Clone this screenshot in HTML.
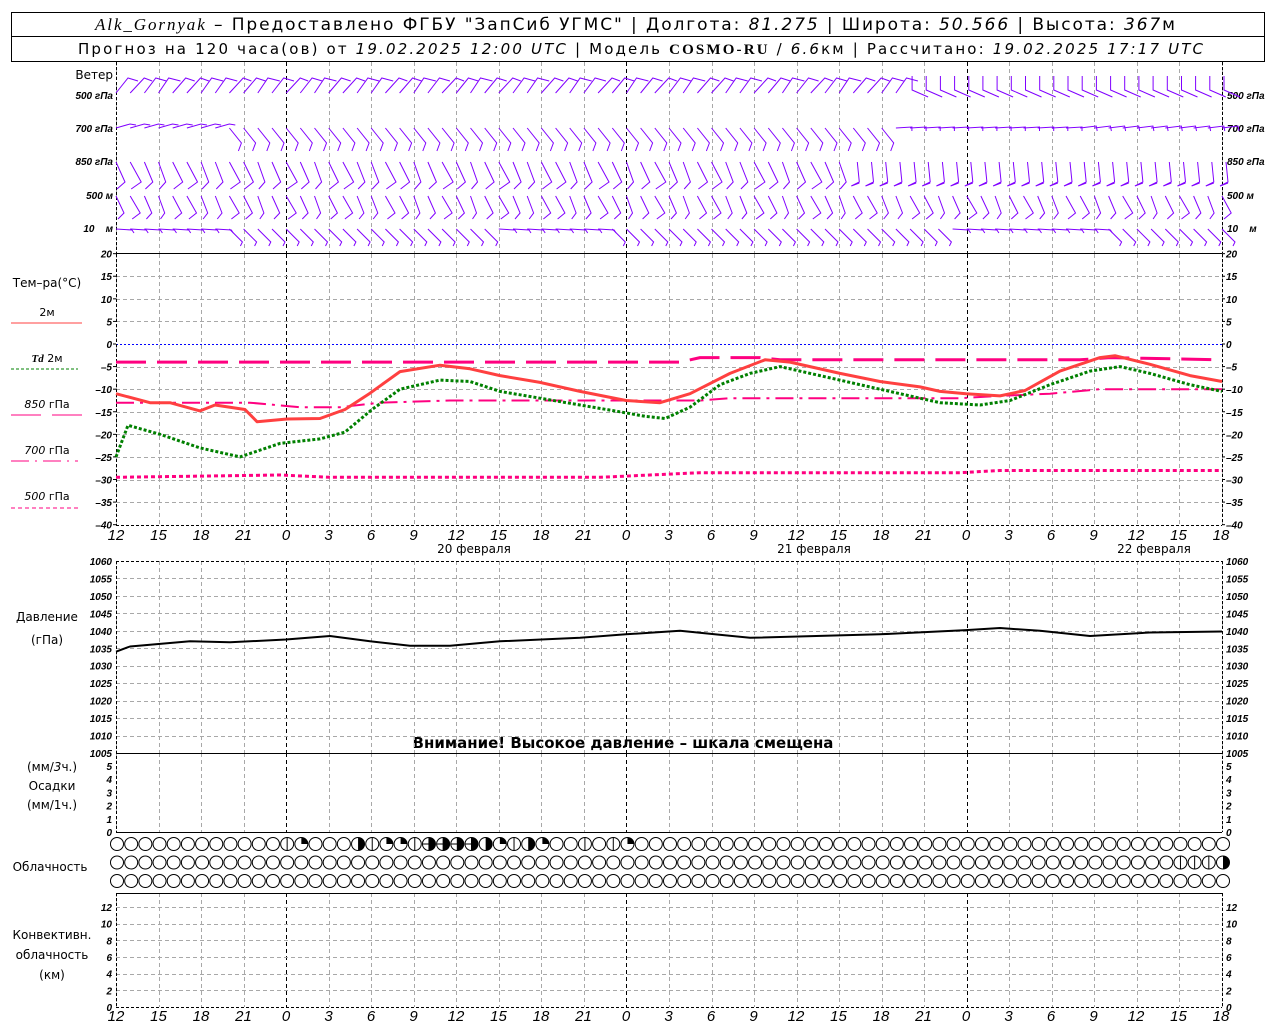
<!DOCTYPE html>
<html><head><meta charset="utf-8"><style>
html,body{margin:0;padding:0;background:#fff;width:1280px;height:1024px;overflow:hidden}
svg{display:block}
text{font-family:"Liberation Sans",sans-serif;fill:#000}
.ax{font-size:10px;font-style:italic;font-weight:bold}
.hr{font-size:15px;font-style:italic}
.lb{font-size:12px;font-family:"DejaVu Sans",sans-serif}
.hd{font-family:"DejaVu Sans",sans-serif}
</style></head><body>
<svg id="s" width="1280" height="1024" xmlns="http://www.w3.org/2000/svg">
<rect x="11.5" y="12.5" width="1253" height="49" fill="none" stroke="#000"/>
<line x1="11" y1="36.5" x2="1265" y2="36.5" stroke="#000"/>
<text x="95" y="30" class="hd" style="font-size:17px" textLength="1080" lengthAdjust="spacing"><tspan font-family="Liberation Serif" font-style="italic">Alk_Gornyak</tspan> – Предоставлено ФГБУ "ЗапСиб УГМС" | Долгота: <tspan font-style="italic">81.275</tspan> | Широта: <tspan font-style="italic">50.566</tspan> | Высота: <tspan font-style="italic">367</tspan>м</text>
<text x="78" y="54" class="hd" style="font-size:15px" textLength="1125" lengthAdjust="spacing">Прогноз на 120 часа(ов) от <tspan font-style="italic">19.02.2025 12:00 UTC</tspan>  | Модель <tspan font-family="Liberation Serif" font-weight="bold">COSMO-RU</tspan> / <tspan font-style="italic">6.6</tspan>км | Рассчитано: <tspan font-style="italic">19.02.2025 17:17 UTC</tspan></text>

<text x="113" y="79" text-anchor="end" class="lb">Ветер</text>
<text x="113" y="99" text-anchor="end" class="ax">500 гПа</text>
<text x="113" y="132" text-anchor="end" class="ax">700 гПа</text>
<text x="113" y="165" text-anchor="end" class="ax">850 гПа</text>
<text x="113" y="199" text-anchor="end" class="ax">500 м</text>
<text x="113" y="232" text-anchor="end" class="ax">10&#160;&#160;&#160; м</text>
<text x="1227" y="99" class="ax">500 гПа</text>
<text x="1227" y="132" class="ax">700 гПа</text>
<text x="1227" y="165" class="ax">850 гПа</text>
<text x="1227" y="199" class="ax">500 м</text>
<text x="1227" y="232" class="ax">10&#160;&#160;&#160; м</text>

<text x="47" y="287" text-anchor="middle" class="lb">Тем–ра(°С)</text>
<text x="47" y="316" text-anchor="middle" class="lb" style="font-size:11px">2м</text>
<line x1="11" y1="323" x2="82" y2="323" stroke="#ff4040"/>
<text x="47" y="362" text-anchor="middle" class="lb" style="font-size:11px"><tspan font-family="Liberation Serif" font-style="italic" font-weight="bold">Td</tspan>  2м</text>
<line x1="11" y1="369" x2="78" y2="369" stroke="#008000" stroke-dasharray="3,2"/>
<text x="47" y="408" text-anchor="middle" class="lb" style="font-size:11px"><tspan font-style="italic">850</tspan> гПа</text>
<line x1="11" y1="415" x2="82" y2="415" stroke="#ff0080" stroke-dasharray="30,11"/>
<text x="47" y="454" text-anchor="middle" class="lb" style="font-size:11px"><tspan font-style="italic">700</tspan> гПа</text>
<line x1="11" y1="461" x2="78" y2="461" stroke="#ff0080" stroke-dasharray="18,6,2,6"/>
<text x="47" y="500" text-anchor="middle" class="lb" style="font-size:11px"><tspan font-style="italic">500</tspan> гПа</text>
<line x1="11" y1="508" x2="78" y2="508" stroke="#ff0080" stroke-dasharray="4,3"/>

<text x="47" y="621" text-anchor="middle" class="lb">Давление</text>
<text x="47" y="644" text-anchor="middle" class="lb">(гПа)</text>
<text x="623" y="748" text-anchor="middle" class="hd" style="font-size:15px;font-weight:bold">Внимание! Высокое давление – шкала смещена</text>

<text x="52" y="771" text-anchor="middle" class="lb">(мм/<tspan font-style="italic">3</tspan>ч.)</text>
<text x="52" y="790" text-anchor="middle" class="lb">Осадки</text>
<text x="52" y="809" text-anchor="middle" class="lb">(мм/1ч.)</text>
<text x="50" y="871" text-anchor="middle" class="lb">Облачность</text>
<text x="52" y="939" text-anchor="middle" class="lb">Конвективн.</text>
<text x="52" y="959" text-anchor="middle" class="lb">облачность</text>
<text x="52" y="979" text-anchor="middle" class="lb">(км)</text>

<text x="474" y="553" text-anchor="middle" class="lb">20 февраля</text>
<text x="814" y="553" text-anchor="middle" class="lb">21 февраля</text>
<text x="1154" y="553" text-anchor="middle" class="lb">22 февраля</text>

<g class="hr">
<text x="116" y="540" text-anchor="middle">12</text><text x="158.5" y="540" text-anchor="middle">15</text><text x="201" y="540" text-anchor="middle">18</text><text x="243.5" y="540" text-anchor="middle">21</text><text x="286" y="540" text-anchor="middle">0</text><text x="328.5" y="540" text-anchor="middle">3</text><text x="371" y="540" text-anchor="middle">6</text><text x="413.5" y="540" text-anchor="middle">9</text><text x="456" y="540" text-anchor="middle">12</text><text x="498.5" y="540" text-anchor="middle">15</text><text x="541" y="540" text-anchor="middle">18</text><text x="583.5" y="540" text-anchor="middle">21</text><text x="626" y="540" text-anchor="middle">0</text><text x="668.5" y="540" text-anchor="middle">3</text><text x="711" y="540" text-anchor="middle">6</text><text x="753.5" y="540" text-anchor="middle">9</text><text x="796" y="540" text-anchor="middle">12</text><text x="838.5" y="540" text-anchor="middle">15</text><text x="881" y="540" text-anchor="middle">18</text><text x="923.5" y="540" text-anchor="middle">21</text><text x="966" y="540" text-anchor="middle">0</text><text x="1008.5" y="540" text-anchor="middle">3</text><text x="1051" y="540" text-anchor="middle">6</text><text x="1093.5" y="540" text-anchor="middle">9</text><text x="1136" y="540" text-anchor="middle">12</text><text x="1178.5" y="540" text-anchor="middle">15</text><text x="1221" y="540" text-anchor="middle">18</text>
</g>
<g class="hr">
<text x="116" y="1021" text-anchor="middle">12</text><text x="158.5" y="1021" text-anchor="middle">15</text><text x="201" y="1021" text-anchor="middle">18</text><text x="243.5" y="1021" text-anchor="middle">21</text><text x="286" y="1021" text-anchor="middle">0</text><text x="328.5" y="1021" text-anchor="middle">3</text><text x="371" y="1021" text-anchor="middle">6</text><text x="413.5" y="1021" text-anchor="middle">9</text><text x="456" y="1021" text-anchor="middle">12</text><text x="498.5" y="1021" text-anchor="middle">15</text><text x="541" y="1021" text-anchor="middle">18</text><text x="583.5" y="1021" text-anchor="middle">21</text><text x="626" y="1021" text-anchor="middle">0</text><text x="668.5" y="1021" text-anchor="middle">3</text><text x="711" y="1021" text-anchor="middle">6</text><text x="753.5" y="1021" text-anchor="middle">9</text><text x="796" y="1021" text-anchor="middle">12</text><text x="838.5" y="1021" text-anchor="middle">15</text><text x="881" y="1021" text-anchor="middle">18</text><text x="923.5" y="1021" text-anchor="middle">21</text><text x="966" y="1021" text-anchor="middle">0</text><text x="1008.5" y="1021" text-anchor="middle">3</text><text x="1051" y="1021" text-anchor="middle">6</text><text x="1093.5" y="1021" text-anchor="middle">9</text><text x="1136" y="1021" text-anchor="middle">12</text><text x="1178.5" y="1021" text-anchor="middle">15</text><text x="1221" y="1021" text-anchor="middle">18</text>
</g>
<g id="dyn"></g>
</svg>
<script>
var NS="http://www.w3.org/2000/svg",d=document.getElementById('dyn');
function el(n,a){var e=document.createElementNS(NS,n);for(var k in a)e.setAttribute(k,a[k]);d.appendChild(e);return e;}
function L(x1,y1,x2,y2,c,w,da){var a={x1:x1,y1:y1,x2:x2,y2:y2,stroke:c||'#000','stroke-width':w||1};if(da)a['stroke-dasharray']=da;return el('line',a);}
var X0=116,X1=1222,PH=(X1-X0)/78;
function hx(h){return X0+h*PH;}
var G='#a8a8a8';
function vgrid(y1,y2){for(var h=0;h<=78;h+=3){var x=Math.round(hx(h))+.5;var midnight=(h%24==12);L(x,y1,x,y2,midnight?'#000':G,1,'4,3');}}
vgrid(62,253);vgrid(254,525);vgrid(561,753);vgrid(753,832);vgrid(893,1007);
function hg(y){L(X0,y+.5,X1,y+.5,G,1,'4,3');}
for(var t=15;t>=-35;t-=5){if(t!=0)hg(Math.round(344-t*4.517));}
for(var p=1055;p>1005;p-=5)hg(Math.round(561+(1060-p)*3.49));
for(var k=2;k<=12;k+=2)hg(Math.round(1007-k*8.33));
L(X0,253.5,X1,253.5);L(X0,753.5,X1,753.5);L(X0,832.5,X1,832.5);L(X0,893.5,X1,893.5);
L(X0,525.5,X1,525.5,'#000',1,'3,2');L(X0,561.5,X1,561.5,'#000',1,'3,2');L(X0,1007.5,X1,1007.5,'#000',1,'3,2');
L(X0,344.5,X1,344.5,'#0000ff',1,'2,2');
[X0+.5,X1+.5].forEach(function(x){L(x,62,x,253,'#000',1,'3,2');L(x,254,x,525,'#000',1,'3,2');L(x,561,x,832,'#000',1,'3,2');L(x,893,x,1007,'#000',1,'3,2');});
function tx(x,y,s,anc){var e=el('text',{x:x,y:y,'class':'ax'});if(anc)e.setAttribute('text-anchor',anc);e.textContent=s;}
for(var t=20;t>=-40;t-=5){var y=344-t*4.517+4;var s=t<0?'–'+(-t):''+t;tx(112,y,s,'end');tx(1226,y,s);L(X0-3,y-4,X0,y-4);L(X1,y-4,X1+3,y-4);}
for(var p=1060;p>=1005;p-=5){var y=561+(1060-p)*3.49+4;tx(112,y,''+p,'end');tx(1226,y,''+p);}
for(var k=0;k<=5;k++){var y=832-k*13.2+4;tx(112,y,''+k,'end');tx(1226,y,''+k);}
for(var k=0;k<=12;k+=2){var y=1007-k*8.33+4;tx(112,y,''+k,'end');tx(1226,y,''+k);}
function poly(pts,fy,c,w,da){var s=pts.map(function(p){return p[0]+','+fy(p[1]).toFixed(1)}).join(' ');var a={points:s,fill:'none',stroke:c,'stroke-width':w,'stroke-linejoin':'round'};if(da)a['stroke-dasharray']=da;el('polyline',a);}
function ty(t){return 344-t*4.517;}
poly([[116,-4],[680,-4],[700,-3],[760,-3],[780,-3.5],[1080,-3.5],[1110,-3],[1222,-3.5]],ty,'#ff0080',3,'30,11');
poly([[116,-13],[250,-13],[300,-14],[340,-14],[380,-13],[450,-12.5],[700,-12.5],[730,-12],[900,-12],[960,-12],[1000,-11.5],[1050,-11],[1100,-10],[1222,-10]],ty,'#ff0080',2,'18,6,3,6');
poly([[116,-29.5],[280,-29],[330,-29.5],[600,-29.5],[700,-28.5],[960,-28.5],[1000,-28],[1222,-28]],ty,'#ff0080',3,'4,3');
poly([[116,-25],[128,-18],[160,-20],[200,-23],[240,-25],[280,-22],[320,-21],[345,-19.5],[372,-14.5],[400,-10],[440,-8],[470,-8.3],[500,-10.5],[540,-12],[580,-13.5],[620,-15],[645,-16],[665,-16.5],[690,-14],[720,-9],[750,-6.5],[780,-5],[820,-7],[860,-9],[900,-11],[940,-13],[980,-13.5],[1010,-12.5],[1050,-9],[1090,-6],[1120,-5],[1150,-6.5],[1190,-9],[1222,-10.5]],ty,'#008000',3,'3,2');
poly([[116,-11],[150,-13],[170,-13],[200,-14.8],[215,-13.5],[245,-14.5],[257,-17.2],[287,-16.6],[320,-16.5],[345,-14.5],[370,-10.9],[400,-6.1],[440,-4.7],[470,-5.5],[500,-7],[540,-8.5],[580,-10.5],[626,-12.5],[660,-13],[690,-11],[730,-6.5],[765,-3.5],[790,-4],[840,-6.5],[880,-8.3],[920,-9.5],[940,-10.5],[966,-11],[1000,-11.5],[1025,-10.3],[1060,-6],[1100,-3],[1115,-2.6],[1150,-4.5],[1190,-7],[1222,-8.3]],ty,'#ff4040',3);
function py(p){return 561+(1060-p)*3.49;}
poly([[116,1034],[130,1035.5],[190,1037],[230,1036.7],[286,1037.5],[330,1038.5],[370,1037],[410,1035.7],[450,1035.7],[500,1037],[580,1038],[626,1039],[680,1040],[750,1038],[880,1039],[966,1040.2],[1000,1040.8],[1040,1040],[1090,1038.5],[1150,1039.5],[1222,1039.8]],py,'#000',2);
var V='#8000ff';
function P(pts){el('polyline',{points:pts.map(function(p){return p[0].toFixed(1)+','+p[1].toFixed(1)}).join(' '),fill:'none',stroke:V,'stroke-width':1});}
for(var h=0;h<=78;h++){var x=hx(h);var r=Math.sin(h*1.7)*2;
 if(h<56)P([[x,93],[x+12+r,78],[x+22,81]]);else P([[x+2,76],[x+2,90],[x+18,97]]);
 if(h<8)P([[x,128],[x+14,124],[x+20,125]]);else if(h<55)P([[x,128],[x+12,143],[x+9,151]]);else if(h<68)P([[x,128],[x+16,127],[x+16,131]]);else P([[x,128],[x+16,126],[x+17,131]]);
 if(h<52)P([[x,162],[x+9+r,182],[x+1,189]]);else P([[x+4,162],[x+6,182],[x-2,186],[x+6,183]]);
 P([[x,196],[x+8+r,213],[x+2,219]]);
 if(h<8||(h>=27&&h<35)||(h>58&&h<70))P([[x,229],[x+16,230],[x+18,233]]);else P([[x,229],[x+13,242],[x+11,246]]);
}
var topR={12:'l',13:'q',17:'h',18:'l',19:'q',20:'q',21:'l',22:'m',23:'m',24:'m',25:'m',26:'h',27:'q',28:'l',29:'h',30:'q',33:'l',35:'l',36:'q'};
var midR={75:'l',76:'l',77:'l',78:'h'};
function circ(x,y,t){el('circle',{cx:x,cy:y,r:6.5,fill:'#fff',stroke:'#000','stroke-width':1});
 if(t=='l'||t=='m')L(x,y-6.5,x,y+6.5);
 if(t=='m')L(x-6.5,y,x,y);
 if(t=='h'||t=='m')el('path',{d:'M'+x+','+(y-6.5)+' A6.5,6.5 0 0 1 '+x+','+(y+6.5)+' Z',fill:'#000'});
 if(t=='q')el('path',{d:'M'+x+','+y+' L'+x+','+(y-6.5)+' A6.5,6.5 0 0 1 '+(x+6.5)+','+y+' Z',fill:'#000'});}
for(var h=0;h<=78;h++){var x=hx(h)+1;circ(x,844,topR[h]);circ(x,862.5,midR[h]);circ(x,881,null);}
</script>
</body></html>
